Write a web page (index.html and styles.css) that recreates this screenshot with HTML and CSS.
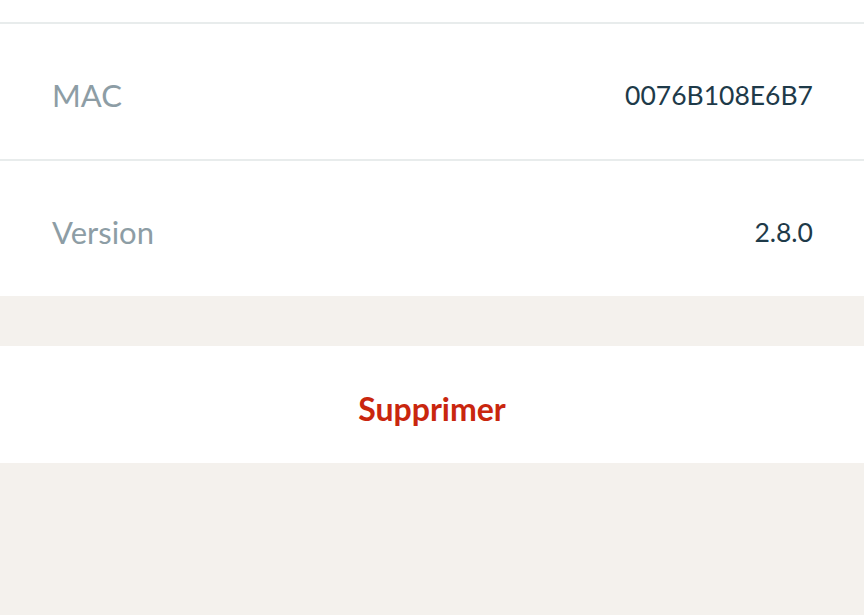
FILE: index.html
```html
<!DOCTYPE html>
<html lang="fr">
<head>
  <meta charset="UTF-8">
  <title>Appareil</title>
  <link rel="stylesheet" href="styles.css">
</head>
<body>

<div class="page">
  <div class="info-list">
    <div class="info-top"></div>
    <div class="info-row">
      <span class="info-label">MAC</span>
      <span class="info-value">0076B108E6B7</span>
    </div>
    <div class="info-row">
      <span class="info-label">Version</span>
      <span class="info-value">2.8.0</span>
    </div>
  </div>

  <div class="spacer"></div>

  <button class="delete-button">Supprimer</button>
</div>

</body>
</html>
```

FILE: styles.css
```css
body {
  margin: 0;
  font-family: Lato, 'Noto Sans', sans-serif;
  background-color: #f4f1ed; /* Beige */
}
.page {
  display: flex;
  flex-direction: column;
}
.info-list {
  background-color: #ffffff;
}
.info-top {
  height: 22px;
}
.info-row {
  display: flex;
  justify-content: space-between;
  align-items: center;
  box-sizing: border-box;
  height: 137px;
  padding: 6px 51px 0 52px;
  border-top: 2px solid #e8ecec;
}
.info-label {
  font-size: 31px;
  color: #8d9da5; /* Grey blue */
}
.info-value {
  font-size: 26.5px;
  color: #1e3a49; /* Dark blue */
}
.spacer {
  height: 50px;
}
.delete-button {
  height: 117px;
  padding: 8px 0 0 0;
  border: none;
  background-color: #ffffff;
  color: #c9260e; /* Red */
  font-family: inherit;
  font-size: 32px;
  font-weight: bold;
  cursor: pointer;
}
```
